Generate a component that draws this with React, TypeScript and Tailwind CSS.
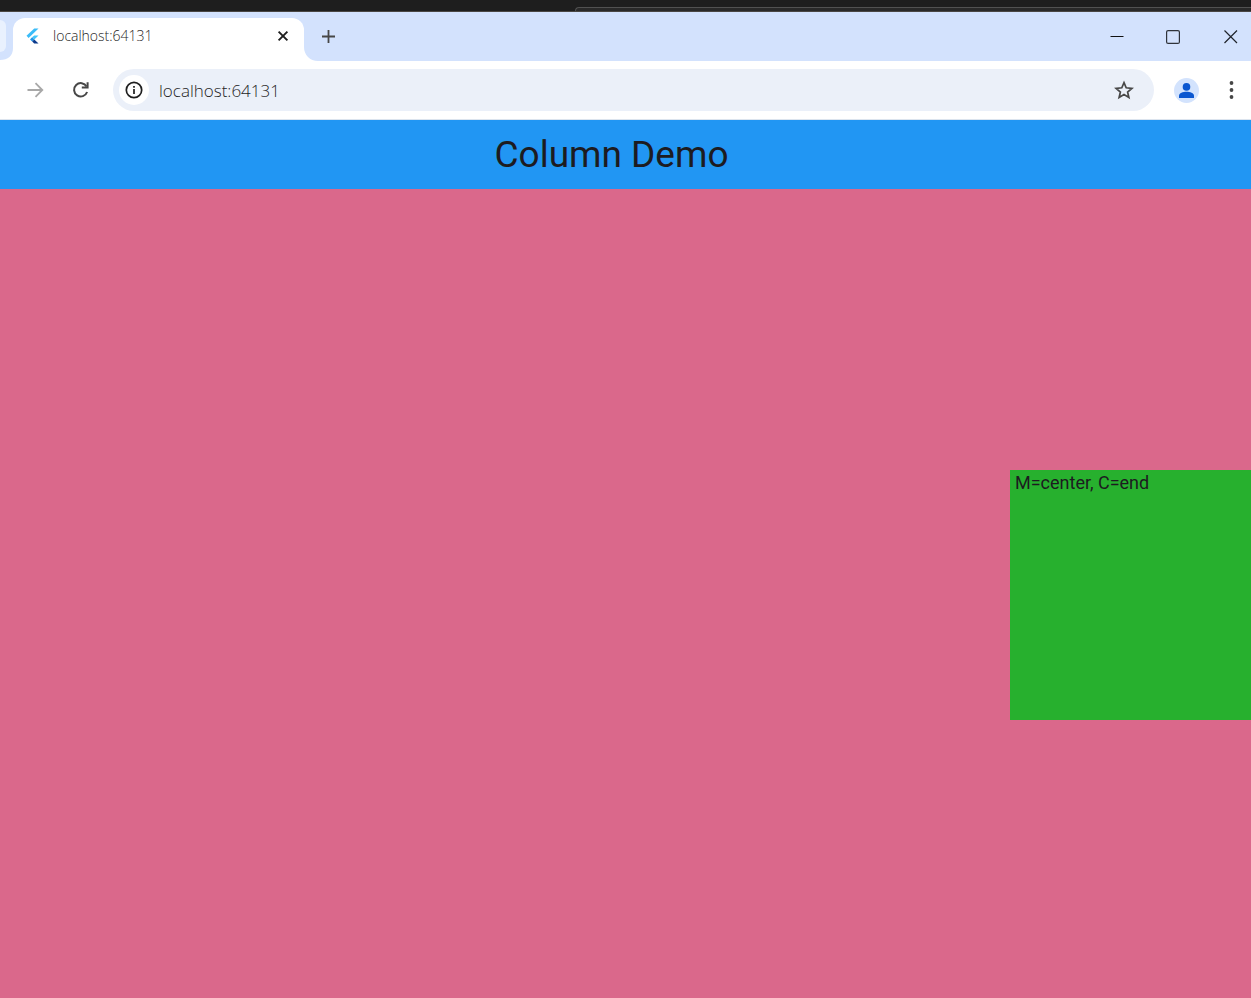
import React from "react";

const iconButton = "flex shrink-0 items-center justify-center p-0";

function FlutterIcon() {
  return (
    <svg width="16" height="16" viewBox="0 0 16 16" aria-hidden="true">
      <path d="M9.2 0.5h4.3L3.6 9.9 1.5 7.8z" fill="#3bbcf8" />
      <path d="M9.2 7.4h4.3L9.3 11.5 7.1 9.3z" fill="#42c5fa" />
      <path d="M5 11.4 7.1 9.3l2.2 2.2-2.1 2.1z" fill="#2196e8" />
      <path d="M7.2 13.6l2.1-2.1 4.2 4.1H9.2z" fill="#0b3a8c" />
    </svg>
  );
}

function BackdropWindow() {
  return (
    <div className="flex h-3 justify-end border-b border-[#4a4744] bg-[#1e1e1e] pt-[7px]">
      <div className="h-1 w-[54%] rounded-tl-md border-t border-l border-[#515151] bg-[#292929]" />
    </div>
  );
}

function TabStrip() {
  return (
    <header className="flex h-[49px] items-stretch bg-[#d3e2fd]">
      <div className="mt-2 h-8 w-1.5 shrink-0 rounded-r-xl bg-[#e9f1fe]" />
      <div className="w-[7px] shrink-0" />
      <div className="relative mt-1.5 flex w-[291px] shrink-0 items-center rounded-t-xl bg-white px-3 pb-[7px]">
        <svg className="absolute bottom-0 -left-[13px]" width="13" height="13" viewBox="0 0 13 13" aria-hidden="true">
          <path d="M13 0v13H0v-1C8 12 13 8 13 0z" fill="#fff" />
        </svg>
        <svg className="absolute -right-[14px] bottom-0" width="14" height="14" viewBox="0 0 14 14" aria-hidden="true">
          <path d="M0 0v14h14C6 14 0 8 0 0z" fill="#fff" />
        </svg>
        <FlutterIcon />
        <span className="ml-3 flex-1 font-['Open_Sans',sans-serif] text-[14px] leading-5 font-[350] text-[#1f1f1f]">
          localhost:64131
        </span>
        <button type="button" aria-label="Close tab" className={`${iconButton} size-[18px]`}>
          <svg width="18" height="18" viewBox="0 0 18 18" fill="none" stroke="#1f1f1f" strokeWidth="1.9" aria-hidden="true">
            <path d="M4.6 4.6l8.8 8.8M13.4 4.6l-8.8 8.8" />
          </svg>
        </button>
      </div>
      <button type="button" aria-label="New tab" className={`${iconButton} ml-3 w-[25px]`}>
        <svg width="13" height="13" viewBox="0 0 13 13" fill="none" stroke="#474747" strokeWidth="1.8" aria-hidden="true">
          <path d="M6.5 0v13M0 6.5h13" />
        </svg>
      </button>
      <div className="flex-1" />
      <div className="flex items-stretch pt-px">
        <button type="button" aria-label="Minimize" className={`${iconButton} w-14`}>
          <svg width="14" height="14" viewBox="0 0 14 14" stroke="#111" aria-hidden="true">
            <path d="M.5 6.5h13" />
          </svg>
        </button>
        <button type="button" aria-label="Maximize" className={`${iconButton} w-14`}>
          <svg width="14" height="14" viewBox="0 0 14 14" fill="none" stroke="#30343b" strokeWidth="1.2" aria-hidden="true">
            <rect x=".6" y=".6" width="12.8" height="12.8" rx="1.5" />
          </svg>
        </button>
        <button type="button" aria-label="Close window" className={`${iconButton} ml-2.5 w-10`}>
          <svg width="14" height="14" viewBox="0 0 14 14" fill="none" stroke="#20242b" strokeWidth="1.2" aria-hidden="true">
            <path d="M.5.5l12.5 12.5M13 .5L.5 13" />
          </svg>
        </button>
      </div>
    </header>
  );
}

function Toolbar() {
  return (
    <nav className="flex h-[59px] items-center border-b border-[#dce4ee] bg-white">
      <button type="button" aria-label="Forward" className={`${iconButton} ml-[23px] size-6`}>
        <svg width="24" height="24" viewBox="0 0 24 24" fill="none" stroke="#a8a8a8" strokeWidth="1.8" aria-hidden="true">
          <path d="M4.5 12h14M12.5 5.2 19.3 12l-6.8 6.8" />
        </svg>
      </button>
      <button type="button" aria-label="Reload" className={`${iconButton} ml-[22px] size-6`}>
        <svg width="24" height="24" viewBox="0 0 24 24" fill="none" stroke="#474747" strokeWidth="2" aria-hidden="true">
          <path d="M17.6 8.5A6.7 6.7 0 1 0 18.1 14" />
          <path d="M18.6 4.300v5.300h-5.800" />
        </svg>
      </button>
      <div className="ml-5 flex h-[42px] min-w-0 flex-1 items-center rounded-full bg-[#ebf0f9] pr-[18px] pl-1.5">
        <button type="button" aria-label="View site information" className={`${iconButton} size-[30px] rounded-full bg-white`}>
          <svg width="18" height="18" viewBox="0 0 18 18" fill="none" stroke="#1f1f1f" strokeWidth="1.7" aria-hidden="true">
            <circle cx="9" cy="9" r="7.7" />
            <path d="M9 8v5M9 5v1.8" />
          </svg>
        </button>
        <input
          type="text"
          aria-label="Address"
          defaultValue="localhost:64131"
          className="ml-2.5 h-8 min-w-0 flex-1 bg-transparent font-['Open_Sans',sans-serif] text-[17px] font-light text-[#1f1f1f] outline-none"
        />
        <button type="button" aria-label="Bookmark this tab" className={`${iconButton} size-6`}>
          <svg width="22" height="22" viewBox="0 0 22 22" fill="none" stroke="#474747" strokeWidth="1.7" aria-hidden="true">
            <path d="M11 3.6l2.2 5.2 5.7.5-4.3 3.7 1.3 5.5L11 15.6l-4.9 2.9 1.3-5.5-4.3-3.7 5.7-.5z" />
          </svg>
        </button>
      </div>
      <button type="button" aria-label="Profile" className={`${iconButton} ml-5 size-[25px] rounded-full bg-[#d3e3fd]`}>
        <svg width="25" height="25" viewBox="0 0 25 25" fill="#0b57d0" aria-hidden="true">
          <circle cx="12.5" cy="8.9" r="3.8" />
          <path d="M5 20v-2.3c0-2.5 4-3.9 7.5-3.9s7.5 1.4 7.5 3.9V20z" />
        </svg>
      </button>
      <button type="button" aria-label="Browser menu" className={`${iconButton} mr-2 ml-5 size-6`}>
        <svg width="24" height="24" viewBox="0 0 24 24" fill="#474747" aria-hidden="true">
          <circle cx="12.5" cy="5" r="1.9" />
          <circle cx="12.5" cy="12" r="1.9" />
          <circle cx="12.5" cy="19" r="1.9" />
        </svg>
      </button>
    </nav>
  );
}

export default function App() {
  return (
    <div className="flex min-h-screen flex-col overflow-x-hidden">
      <BackdropWindow />
      <TabStrip />
      <Toolbar />
      <div className="flex h-[69px] items-center justify-center bg-[#2196f3] pr-7">
        <h1 className="font-[Roboto,sans-serif] text-[37px] leading-[46px] text-[#1d1b20]">Column Demo</h1>
      </div>
      <main className="flex flex-1 flex-col items-end justify-center bg-[#da688b] pt-[3px]">
        <section className="h-[250px] w-[241px] bg-[#27b02e] px-[5px]">
          <p className="font-[Roboto,sans-serif] text-[18px] leading-[25px] text-[#1d1b20]">M=center, C=end</p>
        </section>
      </main>
    </div>
  );
}
